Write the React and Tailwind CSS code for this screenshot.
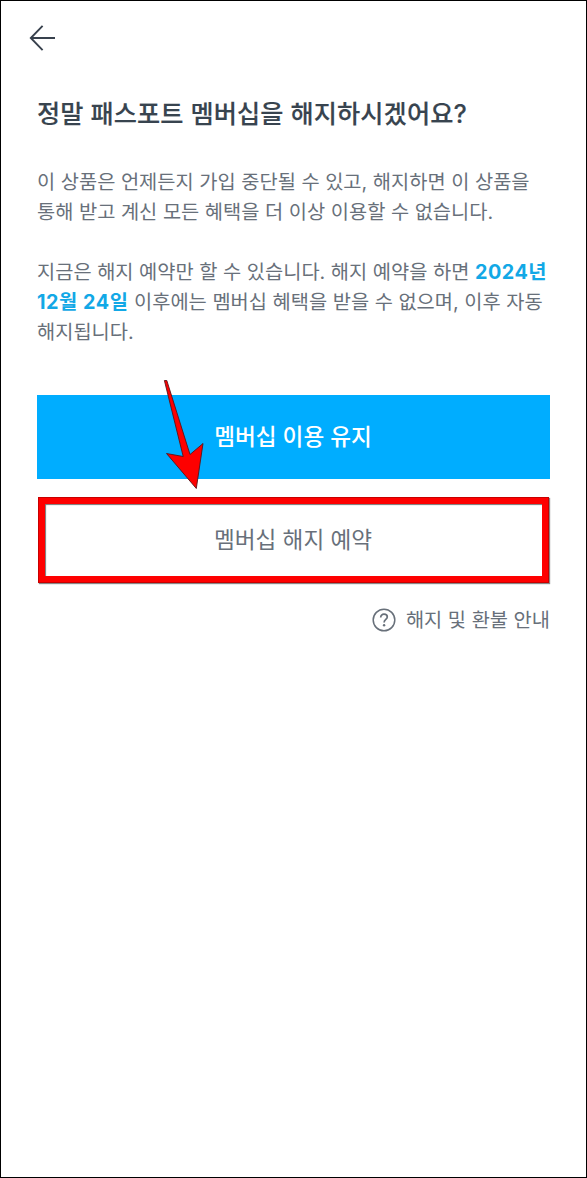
const FONT = "font-['Inter','Noto_Sans_CJK_KR',sans-serif]"

function BackIcon() {
  return (
    <svg width="28" height="28" viewBox="0 0 28 28" fill="none" stroke="#38414d" strokeWidth="1.9">
      <path d="M13.6 1.8 L1.8 14 L13.6 26.2 M2 14 H26" />
    </svg>
  )
}

function HelpIcon() {
  return (
    <svg width="24" height="24" viewBox="0 0 24 24" fill="none" stroke="#68707a" strokeWidth="1.5">
      <circle cx="12" cy="12" r="10.8" />
      <path d="M8.7 9.5 C8.7 7.4 10.1 6.2 12 6.2 C13.9 6.2 15.3 7.4 15.3 9.1 C15.3 11.4 12.1 11.6 12.1 14.4" strokeWidth="1.7" />
      <circle cx="12.1" cy="17.2" r="1.2" fill="#68707a" stroke="none" />
    </svg>
  )
}

function Pointer() {
  return (
    <svg className="absolute left-[126px] -top-[17px]" width="42" height="114" viewBox="0 0 42 114">
      <path
        d="M1.4 2.5 L3.8 2.5 L27 76.5 L40 65.5 L33.3 110.5 L3.5 75.5 L20.2 78.5 Z"
        fill="#fe0000"
        stroke="#5b1216"
        strokeWidth="0.9"
      />
    </svg>
  )
}

export default function App() {
  return (
    <div className={`${FONT} flex h-[1178px] w-[587px] flex-col border border-black bg-white px-9 text-[#68707a]`}>
      <header className="-ml-2 flex h-[74px] items-center">
        <button type="button" aria-label="뒤로">
          <BackIcon />
        </button>
      </header>

      <h1 className="mt-[19px] h-10 text-[25.2px] leading-10 font-medium tracking-[0.12px] whitespace-nowrap text-[#38444f] [-webkit-text-stroke:0.15px_#38444f]">
        정말 패스포트 멤버십을 해지하시겠어요?
      </h1>

      <div className="mt-[33px] flex flex-col gap-[30px] text-[19.8px] leading-[30px] whitespace-nowrap">
        <p>
          이 상품은 언제든지 가입 중단될 수 있고, 해지하면 이 상품을
          <br />
          통해 받고 계신 모든 혜택을 더 이상 이용할 수 없습니다.
        </p>
        <p>
          지금은 해지 예약만 할 수 있습니다. 해지 예약을 하면{' '}
          <b className="font-bold tracking-[0.5px] text-[#12a8e6]">2024년</b>
          <br />
          <b className="font-bold tracking-[0.55px] text-[#12a8e6]">12월 24일</b> 이후에는 멤버십 혜택을 받을 수 없으며, 이후 자동
          <br />
          해지됩니다.
        </p>
      </div>

      <div className="relative mt-[48px] flex flex-col gap-[18px] text-[22.6px]">
        <button type="button" className="h-[84px] w-[513px] bg-[#00adff] pr-px font-medium text-white">
          멤버십 이용 유지
        </button>
        <button
          type="button"
          className="ml-px h-[86px] w-[511px] border-[7px] border-[#fe0000] pr-px shadow-[1px_1px_1px_#888,inset_1px_1px_1px_#777] outline-1 -outline-offset-1 outline-[#c80000]"
        >
          멤버십 해지 예약
        </button>
        <Pointer />
      </div>

      <button type="button" className="mt-[21px] flex h-8 w-[513px] items-center justify-end gap-2.5 text-[19.8px]">
        <HelpIcon />
        <span className="pt-px">해지 및 환불 안내</span>
      </button>
    </div>
  )
}
